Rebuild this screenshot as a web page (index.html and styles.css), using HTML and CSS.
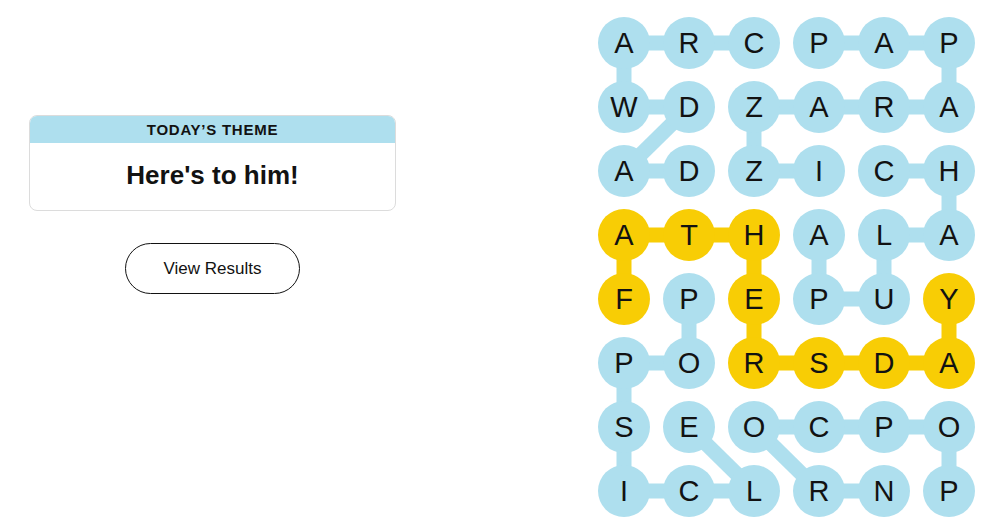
FILE: index.html
```html
<!DOCTYPE html>
<html lang="en">
<head>
  <meta charset="UTF-8" />
  <meta name="viewport" content="width=device-width, initial-scale=1" />
  <title>Strands</title>
  <link rel="stylesheet" href="styles.css">
</head>
<body>
  <main class="game">
    <section class="side">
      <div class="theme-card">
        <div class="theme-label">Today’s Theme</div>
        <div class="theme-text">Here's to him!</div>
      </div>
      <button class="results-btn" type="button">View Results</button>
    </section>

    <section class="board" aria-label="Puzzle board">
      <!-- connectors between found letters -->
      <svg class="links" width="377" height="500" viewBox="0 0 377 500" aria-hidden="true">
        <g class="found">
          <!-- CRAWDAD -->
          <line x1="26" y1="26" x2="156" y2="26" />
          <line x1="26" y1="26" x2="26" y2="90" />
          <line x1="26" y1="90" x2="91" y2="90" />
          <line x1="91" y1="90" x2="26" y2="154" />
          <line x1="26" y1="154" x2="91" y2="154" />
          <!-- PAPARAZZI -->
          <line x1="221" y1="26" x2="351" y2="26" />
          <line x1="351" y1="26" x2="351" y2="90" />
          <line x1="156" y1="90" x2="351" y2="90" />
          <line x1="156" y1="90" x2="156" y2="154" />
          <line x1="156" y1="154" x2="221" y2="154" />
          <!-- CHALUPA -->
          <line x1="286" y1="154" x2="351" y2="154" />
          <line x1="351" y1="154" x2="351" y2="218" />
          <line x1="286" y1="218" x2="351" y2="218" />
          <line x1="286" y1="218" x2="286" y2="282" />
          <line x1="221" y1="282" x2="286" y2="282" />
          <line x1="221" y1="218" x2="221" y2="282" />
          <!-- POPSICLE -->
          <line x1="91" y1="282" x2="91" y2="346" />
          <line x1="26" y1="346" x2="91" y2="346" />
          <line x1="26" y1="346" x2="26" y2="474" />
          <line x1="26" y1="474" x2="156" y2="474" />
          <line x1="156" y1="474" x2="91" y2="410" />
          <!-- POPCORN -->
          <line x1="156" y1="410" x2="351" y2="410" />
          <line x1="351" y1="410" x2="351" y2="474" />
          <line x1="156" y1="410" x2="221" y2="474" />
          <line x1="221" y1="474" x2="286" y2="474" />
        </g>
        <g class="spangram">
          <!-- FATHERSDAY -->
          <line x1="26" y1="282" x2="26" y2="218" />
          <line x1="26" y1="218" x2="156" y2="218" />
          <line x1="156" y1="218" x2="156" y2="346" />
          <line x1="156" y1="346" x2="351" y2="346" />
          <line x1="351" y1="346" x2="351" y2="282" />
        </g>
      </svg>

      <span class="cell">A</span><span class="cell">R</span><span class="cell">C</span><span class="cell">P</span><span class="cell">A</span><span class="cell">P</span>
      <span class="cell">W</span><span class="cell">D</span><span class="cell">Z</span><span class="cell">A</span><span class="cell">R</span><span class="cell">A</span>
      <span class="cell">A</span><span class="cell">D</span><span class="cell">Z</span><span class="cell">I</span><span class="cell">C</span><span class="cell">H</span>
      <span class="cell span">A</span><span class="cell span">T</span><span class="cell span">H</span><span class="cell">A</span><span class="cell">L</span><span class="cell">A</span>
      <span class="cell span">F</span><span class="cell">P</span><span class="cell span">E</span><span class="cell">P</span><span class="cell">U</span><span class="cell span">Y</span>
      <span class="cell">P</span><span class="cell">O</span><span class="cell span">R</span><span class="cell span">S</span><span class="cell span">D</span><span class="cell span">A</span>
      <span class="cell">S</span><span class="cell">E</span><span class="cell">O</span><span class="cell">C</span><span class="cell">P</span><span class="cell">O</span>
      <span class="cell">I</span><span class="cell">C</span><span class="cell">L</span><span class="cell">R</span><span class="cell">N</span><span class="cell">P</span>
    </section>
  </main>
</body>
</html>
```

FILE: styles.css
```css
*, *::before, *::after {
  box-sizing: border-box;
}
body {
  margin: 0;
  padding: 0;
  font-family: "Liberation Sans", Arial, sans-serif;
  background-color: #fff;
  color: #121212;
}

.game {
  display: flex;
  align-items: flex-start;
}

/* Left column */
.side {
  width: 425px;
  padding: 115px 29px 0 29px;
  display: flex;
  flex-direction: column;
  align-items: center;
}
.theme-card {
  width: 100%;
  border: 1px solid #dcdcdc;
  border-radius: 8px;
  overflow: hidden;
}
.theme-label {
  height: 27px;
  line-height: 28px;
  background-color: #aedfee;
  text-align: center;
  text-transform: uppercase;
  font-size: 15px;
  font-weight: 700;
  letter-spacing: 0.05em;
}
.theme-text {
  height: 67px;
  display: flex;
  align-items: center;
  justify-content: center;
  padding-bottom: 2px;
  font-size: 26px;
  font-weight: 700;
}
.results-btn {
  margin-top: 32px;
  width: 175px;
  height: 51px;
  border: 1px solid #121212;
  border-radius: 26px;
  background: #fff;
  color: #121212;
  font-family: inherit;
  font-size: 17px;
  cursor: pointer;
}

/* Board */
.board {
  position: relative;
  margin: 17px 0 0 173px;
  display: grid;
  grid-template-columns: repeat(6, 52px);
  grid-auto-rows: 52px;
  column-gap: 13px;
  row-gap: 12px;
}
.links {
  position: absolute;
  left: 0;
  top: 0;
}
.links line {
  stroke-width: 15;
}
.links .found line {
  stroke: #aedfee;
}
.links .spangram line {
  stroke: #f8cd05;
}
.cell {
  position: relative;
  display: flex;
  align-items: center;
  justify-content: center;
  border-radius: 50%;
  background-color: #aedfee;
  font-size: 29px;
  line-height: 1;
  user-select: none;
}
.cell.span {
  background-color: #f8cd05;
}
```
